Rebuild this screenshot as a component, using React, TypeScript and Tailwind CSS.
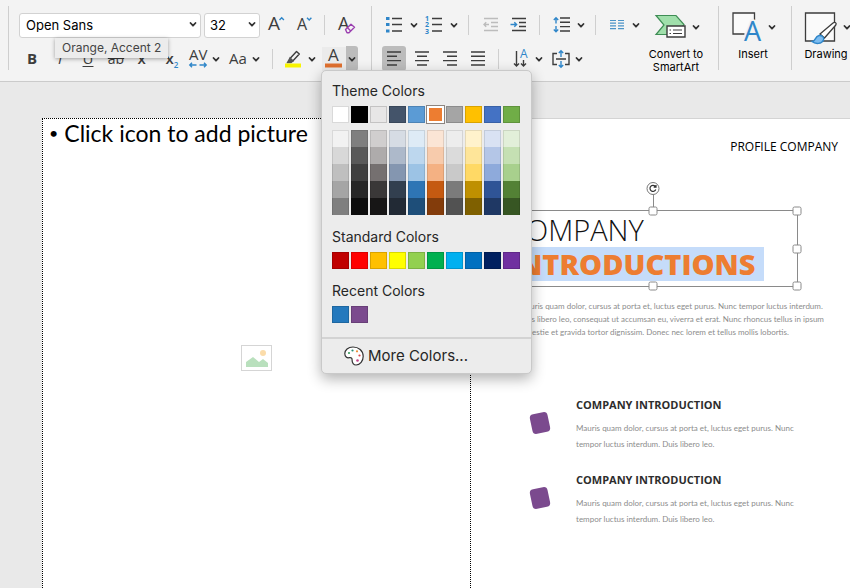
import type { ReactNode } from 'react';

const INK = '#3d3d3d';
const BLUE = '#2f86c9';

function Chevron() {
  return (
    <svg width="12" height="12" viewBox="0 0 12 12" fill="none" stroke="#333" strokeWidth="1.8" strokeLinecap="round" strokeLinejoin="round" aria-hidden="true">
      <path d="M3.5 5 6 7.7 8.5 5" />
    </svg>
  );
}

function More({ label, className = '' }: { label: string; className?: string }) {
  return (
    <button type="button" aria-label={label} className={`flex h-6 w-3 shrink-0 items-center justify-center ${className}`}>
      <Chevron />
    </button>
  );
}

function Tool({ label, className = 'w-6', children }: { label: string; className?: string; children: ReactNode }) {
  return (
    <button type="button" aria-label={label} className={`flex h-6 min-w-6 shrink-0 items-center justify-center text-[#3d3d3d] ${className}`}>
      {children}
    </button>
  );
}

function Divider({ className = '' }: { className?: string }) {
  return <span className={`h-5 w-px shrink-0 bg-[#cfcfcf] ${className}`} />;
}

function GroupDivider({ className = '' }: { className?: string }) {
  return <span className={`-mt-1.5 h-16 w-px shrink-0 bg-[#cecece] ${className}`} />;
}

function Svg({ w = 20, h = 20, children }: { w?: number; h?: number; children: ReactNode }) {
  return (
    <svg width={w} height={h} viewBox={`0 0 ${w} ${h}`} fill="none" stroke={INK} strokeWidth="1.4" className="shrink-0 overflow-visible font-['Open_Sans',sans-serif]" aria-hidden="true">
      {children}
    </svg>
  );
}

function Glyph({ x, y, size, fill = INK, weight = 400, children }: { x: number; y: number; size: number; fill?: string; weight?: number; children: string }) {
  return (
    <text x={x} y={y} fontSize={size} fill={fill} stroke="none" fontWeight={weight}>
      {children}
    </text>
  );
}

function FontGroup() {
  return (
    <div className="flex shrink-0 flex-col gap-[9px] pl-2.5 pr-3">
      <div className="flex h-[25px] items-center">
        <div className="relative h-[25px] w-[182px]">
          <select aria-label="Font" className="h-full w-full appearance-none rounded-[3px] border border-[#d2d2d2] bg-white pl-1.5 text-[13px] leading-none text-black">
            <option>Open Sans</option>
          </select>
          <span className="pointer-events-none absolute right-0.5 top-1.5"><Chevron /></span>
        </div>
        <div className="relative ml-[3px] h-[25px] w-14">
          <select aria-label="Font size" className="h-full w-full appearance-none rounded-[3px] border border-[#d2d2d2] bg-white pl-[5px] text-[13px] leading-none text-black">
            <option>32</option>
          </select>
          <span className="pointer-events-none absolute right-0.5 top-1.5"><Chevron /></span>
        </div>
        <Tool label="Increase font size" className="ml-1">
          <Svg>
            <Glyph x={2} y={15} size={19}>A</Glyph>
            <path d="m13.500 5 2.200-2.300 2.200 2.300" stroke={BLUE} />
          </Svg>
        </Tool>
        <Tool label="Decrease font size" className="ml-1">
          <Svg>
            <Glyph x={3} y={15} size={16}>A</Glyph>
            <path d="m13 2.700 2.200 2.300 2.200-2.300" stroke={BLUE} />
          </Svg>
        </Tool>
        <Divider className="ml-2" />
        <Tool label="Clear formatting" className="ml-2.5">
          <Svg>
            <Glyph x={1} y={15} size={18}>A</Glyph>
            <path d="m8.500 14.500 5.500-5.300 3.500 3-5.500 5.500h-2z" fill="#f3f3f3" stroke="#9b3fb0" strokeLinejoin="round" />
            <path d="m10.500 12.700 3.300 3.200" stroke="#9b3fb0" />
          </Svg>
        </Tool>
      </div>
      <div className="-ml-px flex h-[25px] items-center font-['Open_Sans',sans-serif] text-[15px]">
        <Tool label="Bold" className="w-7"><b>B</b></Tool>
        <Tool label="Italic" className="w-7"><i>I</i></Tool>
        <Tool label="Underline" className="w-7"><u className="underline-offset-2">U</u></Tool>
        <Tool label="Strikethrough" className="w-7 text-sm"><s>ab</s></Tool>
        <Tool label="Superscript" className="w-7 font-semibold">x<sup className="text-[8px] text-[#2f86c9]">2</sup></Tool>
        <Tool label="Subscript" className="w-7 font-semibold">x<sub className="mt-2 text-[8px] text-[#2f86c9]">2</sub></Tool>
        <Tool label="Character spacing">
          <Svg>
            <Glyph x={1} y={11} size={15}>AV</Glyph>
            <path d="M8.500 16H2m2-2.200L1.800 16 4 18.200M11.500 16H18m-2-2.200 2.200 2.200-2.200 2.200" stroke={BLUE} />
          </Svg>
        </Tool>
        <More label="Spacing options" />
        <Tool label="Change case" className="ml-1"><span>Aa</span></Tool>
        <More label="Case options" />
        <Divider className="ml-2.5" />
        <Tool label="Highlight" className="ml-2">
          <Svg>
            <path d="m7 9.500 6.500-7 2.800 2.600L9.800 12H7z" strokeLinejoin="round" />
            <path d="M7 9 4.500 13.500H8L10 12z" fill="#555" stroke="#555" />
            <path d="M2 16.500h16" stroke="#f8f400" strokeWidth="4" />
          </Svg>
        </Tool>
        <More label="Highlight options" className="ml-px" />
        <Tool label="Font color" className="ml-1 bg-[#ebebeb]">
          <Svg>
            <Glyph x={4} y={12} size={17}>A</Glyph>
            <path d="M1 16.500h17" stroke="#e0702f" strokeWidth="4" />
          </Svg>
        </Tool>
        <button type="button" aria-label="Font color options" aria-expanded="true" className="flex h-[25px] w-3 items-center justify-center rounded-r-[3px] bg-[#bcbcbc]">
          <Chevron />
        </button>
      </div>
    </div>
  );
}

function ParagraphGroup() {
  return (
    <div className="flex shrink-0 flex-col gap-[9px] pl-2.5">
      <div className="flex h-[25px] items-center">
        <Tool label="Bullets">
          <Svg>
            <path d="M8 3.500h10M8 9.500h10M8 16h10" />
            <path d="M2 3.500h3.500M2 9.500h3.500M2 16h3.500" stroke={BLUE} strokeWidth="3.200" />
          </Svg>
        </Tool>
        <More label="Bullet options" className="ml-0.5" />
        <Tool label="Numbering" className="ml-0.5">
          <Svg>
            <path d="M8 3.500h10M8 9.500h10M8 16h10" />
            <Glyph x={1} y={6} size={7} fill={BLUE} weight={700}>1</Glyph>
            <Glyph x={1} y={12} size={7} fill={BLUE} weight={700}>2</Glyph>
            <Glyph x={1} y={19} size={7} fill={BLUE} weight={700}>3</Glyph>
          </Svg>
        </Tool>
        <More label="Numbering options" className="ml-0.5" />
        <Divider className="ml-2" />
        <Tool label="Decrease indent" className="ml-2.5">
          <Svg>
            <path d="M3 3.500h14M10 7.500h7M10 11.500h7M3 15.500h14M8 9.500H3m2.200-2.300L3 9.500l2.200 2.300" stroke="#bcbcbc" />
          </Svg>
        </Tool>
        <Tool label="Increase indent" className="ml-1">
          <Svg>
            <path d="M3 3.500h14M10 7.500h7M10 11.500h7M3 15.500h14" />
            <path d="M1.500 9.500h6M5.300 7.200l2.300 2.300-2.300 2.300" stroke={BLUE} />
          </Svg>
        </Tool>
        <Divider className="ml-2" />
        <Tool label="Line spacing" className="ml-2.5">
          <Svg>
            <path d="M8 3h10M8 7.300h10M8 11.600h10M8 16h10" />
            <path d="M4 8.500V3M1.800 5 4 2.800 6.200 5M4 11v5.500M1.800 14.500 4 16.700l2.200-2.200" stroke={BLUE} />
          </Svg>
        </Tool>
        <More label="Line spacing options" className="ml-px" />
        <Divider className="ml-2" />
        <Tool label="Columns" className="ml-2.5">
          <Svg>
            <path d="M2 5.500h6M2 8.200h6M2 10.900h6M2 13.600h6M10 5.500h6M10 8.200h6M10 10.900h6M10 13.600h6" stroke="#4c94c8" strokeWidth="1.200" />
          </Svg>
        </Tool>
        <More label="Column options" />
      </div>
      <div className="flex h-[25px] items-center">
        <button type="button" aria-label="Align left" aria-pressed="true" className="mr-1 flex h-[25px] w-6 items-center justify-center rounded-[3px] bg-[#bcbcbc]">
          <Svg><path d="M3 3h14M3 7.300h10M3 11.600h14M3 16h10" /></Svg>
        </button>
        <Tool label="Align center" className="mr-1">
          <Svg><path d="M3 3h14M5 7.300h10M3 11.600h14M5 16h10" /></Svg>
        </Tool>
        <Tool label="Align right" className="mr-1">
          <Svg><path d="M3 3h14M7 7.300h10M3 11.600h14M7 16h10" /></Svg>
        </Tool>
        <Tool label="Justify">
          <Svg><path d="M3 3h14M3 7.300h14M3 11.600h14M3 16h14" /></Svg>
        </Tool>
        <Divider className="ml-2" />
        <Tool label="Text direction" className="ml-2.5">
          <Svg>
            <path d="M5.500 2V17M3 14.500 5.500 17 8 14.500M12.500 11V17M10 14.500l2.500 2.500 2.500-2.500" />
            <Glyph x={9} y={9} size={12} fill={BLUE}>A</Glyph>
          </Svg>
        </Tool>
        <More label="Direction options" />
        <Tool label="Align text" className="ml-1">
          <Svg>
            <path d="M6 4.500H2v11h4M14 4.500h4v11h-4M5 10h10" />
            <path d="M10 8V2M7.800 4 10 1.800 12.200 4M10 12v6M7.800 16l2.200 2.200 2.200-2.200" stroke={BLUE} />
          </Svg>
        </Tool>
        <More label="Align text options" />
      </div>
    </div>
  );
}

function BigTool({ icon, children, className = '' }: { icon: ReactNode; children: ReactNode; className?: string }) {
  return (
    <button type="button" className={`flex w-16 shrink-0 flex-col items-center ${className}`}>
      <span className="ml-1 flex h-[30px] items-center gap-1">
        {icon}
        <Chevron />
      </span>
      <span className="mt-1.5 whitespace-nowrap text-[11px] leading-[13px] text-black">{children}</span>
    </button>
  );
}

function Toolbar() {
  return (
    <header className="flex h-[82px] shrink-0 items-start overflow-hidden border-b border-[#cbcbcb] bg-[#f3f3f3] pl-2 pt-3">
      <GroupDivider />
      <FontGroup />
      <GroupDivider />
      <ParagraphGroup />
      <BigTool
        className="ml-0.5"
        icon={
          <Svg w={31} h={30}>
            <path d="M1 3.500h20l8 9-8 10H1l8-9.500z" fill="#a0dfab" stroke="#3f8d55" strokeWidth="1.200" />
            <path d="M12 14h18v11H12z" fill="#fff" />
            <path d="M14.500 18h1.500M18 18h9M14.500 21.500h1.500M18 21.500h9" strokeWidth="1.200" />
          </Svg>
        }
      >
        Convert to<br />SmartArt
      </BigTool>
      <GroupDivider className="ml-2.5" />
      <BigTool
        className="ml-0.5"
        icon={
          <Svg w={30} h={30}>
            <path d="M12.500 22H1V1h21.500v7" fill="#fafafa" stroke={INK} strokeWidth="1.300" />
            <text x="12" y="29" fontSize="27" fill="#d9ecfa" stroke="#f3f3f3" strokeWidth="3" paintOrder="stroke">A</text>
            <text x="12" y="29" fontSize="27" fill="#2f86c9" stroke="none">A</text>
          </Svg>
        }
      >
        Insert
      </BigTool>
      <GroupDivider className="ml-1.5" />
      <BigTool
        className="ml-0.5"
        icon={
          <Svg w={33} h={32}>
            <path d="M1.500 2h29v28h-29z" fill="#fafafa" strokeWidth="1.300" />
            <path d="m16 23 13-11c2-1.500 4 .2 2.800 2L20.500 27z" fill="#fff" strokeWidth="1.300" />
            <path d="M8 30.500c4 0 2.500-5 7-6 3-.5 5.500 2 4.500 4.500-1.500 4-8 4.500-11.500 1.500z" fill="#7cbcf0" stroke={BLUE} />
          </Svg>
        }
      >
        Drawing
      </BigTool>
    </header>
  );
}

const THEME = [
  { name: 'White', base: 'bg-white', tints: ['bg-[#f2f2f2]', 'bg-[#d8d8d8]', 'bg-[#bfbfbf]', 'bg-[#a5a5a5]', 'bg-[#7f7f7f]'] },
  { name: 'Black', base: 'bg-black', tints: ['bg-[#7f7f7f]', 'bg-[#595959]', 'bg-[#3f3f3f]', 'bg-[#262626]', 'bg-[#0c0c0c]'] },
  { name: 'Light Gray', base: 'bg-[#e7e6e6]', tints: ['bg-[#d0cece]', 'bg-[#aeabab]', 'bg-[#757070]', 'bg-[#3a3838]', 'bg-[#171616]'] },
  { name: 'Blue-Gray', base: 'bg-[#44546a]', tints: ['bg-[#d6dce4]', 'bg-[#adb9ca]', 'bg-[#8496b0]', 'bg-[#323f4f]', 'bg-[#222a35]'] },
  { name: 'Blue', base: 'bg-[#5b9bd5]', tints: ['bg-[#deebf6]', 'bg-[#bdd7ee]', 'bg-[#9cc3e5]', 'bg-[#2e75b5]', 'bg-[#1e4e79]'] },
  { name: 'Orange', base: 'bg-[#ed7d31]', tints: ['bg-[#fbe5d5]', 'bg-[#f7cbac]', 'bg-[#f4b183]', 'bg-[#c55a11]', 'bg-[#833c0b]'] },
  { name: 'Gray', base: 'bg-[#a5a5a5]', tints: ['bg-[#ededed]', 'bg-[#dbdbdb]', 'bg-[#c9c9c9]', 'bg-[#7b7b7b]', 'bg-[#525252]'] },
  { name: 'Gold', base: 'bg-[#ffc000]', tints: ['bg-[#fff2cc]', 'bg-[#fee599]', 'bg-[#ffd965]', 'bg-[#bf9000]', 'bg-[#7f6000]'] },
  { name: 'Indigo', base: 'bg-[#4472c4]', tints: ['bg-[#d9e2f3]', 'bg-[#b4c6e7]', 'bg-[#8eaadb]', 'bg-[#2f5496]', 'bg-[#1f3864]'] },
  { name: 'Green', base: 'bg-[#70ad47]', tints: ['bg-[#e2efd9]', 'bg-[#c5e0b3]', 'bg-[#a8d08d]', 'bg-[#538135]', 'bg-[#375623]'] },
];

const STANDARD = [
  ['Dark Red', 'bg-[#c00000]'], ['Red', 'bg-[#ff0000]'], ['Orange', 'bg-[#ffc000]'], ['Yellow', 'bg-[#ffff00]'], ['Light Green', 'bg-[#92d050]'],
  ['Green', 'bg-[#00b050]'], ['Light Blue', 'bg-[#00b0f0]'], ['Blue', 'bg-[#0070c0]'], ['Dark Blue', 'bg-[#002060]'], ['Purple', 'bg-[#7030a0]'],
];

const RECENT = [['Blue', 'bg-[#2479bd]'], ['Purple', 'bg-[#7b4a8e]']];

function Swatch({ label, color, selected = false }: { label: string; color: string; selected?: boolean }) {
  const edge = selected ? 'border-2 border-white outline outline-[#8d8580]' : 'border border-black/15';
  return <button type="button" aria-label={label} className={`block h-[17px] w-[17px] shrink-0 ${color} ${edge}`} />;
}

function ColorMenu() {
  return (
    <div role="dialog" aria-label="Font color" className="absolute left-[321px] top-[70px] z-20 w-[211px] rounded-[5px] border border-[#c9c9c9] bg-[#ececec] text-[#262626] shadow-[0_5px_14px_rgba(0,0,0,0.3)]">
      <div className="px-2.5 pb-3.5 pt-2.5 text-[14px] leading-5">
        <h2>Theme Colors</h2>
        <div className="mt-[5px] flex gap-0.5">
          {THEME.map((c) => <Swatch key={c.name} label={c.name} color={c.base} selected={c.name === 'Orange'} />)}
        </div>
        <div className="mt-[7px] flex gap-0.5">
          {THEME.map((c) => (
            <div key={c.name}>
              {c.tints.map((t, i) => (
                <button key={t} type="button" aria-label={`${c.name} shade ${i + 1}`} className={`block h-[17px] w-[17px] border-x border-black/10 first:border-t ${t}`} />
              ))}
            </div>
          ))}
        </div>
        <h2 className="mt-3">Standard Colors</h2>
        <div className="mt-[5px] flex gap-0.5">
          {STANDARD.map(([n, c]) => <Swatch key={n} label={n} color={c} />)}
        </div>
        <h2 className="mt-3">Recent Colors</h2>
        <div className="mt-[5px] flex gap-0.5">
          {RECENT.map(([n, c]) => <Swatch key={n} label={n} color={c} />)}
        </div>
      </div>
      <button type="button" className="flex h-9 w-full items-center gap-1 border-t-2 border-[#d3d3d3] pl-[22px] text-[15px]">
        <svg width="20" height="20" viewBox="0 0 20 20" aria-hidden="true">
          <path d="M9 1C4 1 .8 4 .8 7.600c0 3 2.200 4.700 4.400 4.100 2-.5 3 .5 2.900 2.200-.1 3 1.500 5.100 4 5.100 4 0 7.100-4 7.100-8.700C19.200 4.500 14.500 1 9 1z" fill="#fff" stroke="#333" strokeWidth="1.200" />
          <circle cx="5" cy="7" r="1.100" fill="#3a9d5c" />
          <circle cx="8.500" cy="4.500" r="1.100" fill="#278f75" />
          <circle cx="13" cy="5.300" r="1.100" fill="#ed8b36" />
          <circle cx="15.500" cy="9.500" r="1.100" fill="#e0454c" />
          <circle cx="13.500" cy="14.500" r="1.300" fill="#c04488" />
        </svg>
        <span>More Colors...</span>
      </button>
    </div>
  );
}

const HANDLES = [
  'left-0 top-0', 'left-1/2 top-0', 'left-full top-0', 'left-0 top-1/2',
  'left-full top-1/2', 'left-0 top-full', 'left-1/2 top-full', 'left-full top-full',
];

function TitleBox() {
  return (
    <div className="relative ml-9 mt-[54px] h-[77px] w-[291px] border border-[#8a8a8a] pt-0.5">
      <h1 className="text-[29px] leading-[34px]">
        <span className="block font-light text-[#111]">COMPANY</span>
        <span className="inline-block bg-[#c5dcfa] pr-2 font-extrabold text-[#ed7d31]">INTRODUCTIONS</span>
      </h1>
      <span className="absolute -top-4 left-1/2 h-4 w-px bg-[#8a8a8a]" />
      <button type="button" aria-label="Rotate" className="absolute -top-[29px] left-1/2 flex h-[13px] w-[13px] -translate-x-1/2 items-center justify-center rounded-full border border-[#777] bg-white">
        <svg width="9" height="9" viewBox="0 0 9 9" fill="none" stroke="#333" strokeWidth="1.200" aria-hidden="true">
          <path d="M7.300 5.500A3 3 0 1 1 6.800 2.500M7.500 1v2.200H5.200" />
        </svg>
      </button>
      {HANDLES.map((p) => (
        <span key={p} className={`absolute h-[9px] w-[9px] -translate-x-1/2 -translate-y-1/2 rounded-[2px] border border-[#8a8a8a] bg-white ${p}`} />
      ))}
    </div>
  );
}

function Feature() {
  return (
    <article className="flex h-[75px] items-start">
      <span className="mt-4 h-[20px] w-[18px] shrink-0 -rotate-12 rounded-[4px] bg-[#7b4a8e]" />
      <div className="ml-[27px]">
        <h3 className="text-[11px] font-bold leading-4 text-[#2d2d2d]">COMPANY INTRODUCTION</h3>
        <p className="mt-[7px] font-['Lato',sans-serif] text-[8px] leading-4 text-[#8c8c8c]">
          Mauris quam dolor, cursus at porta et, luctus eget purus. Nunc<br />tempor luctus interdum. Duis libero leo.
        </p>
      </div>
    </article>
  );
}

function Slide() {
  return (
    <main className="ml-[42px] mt-9 flex min-h-0 flex-1 bg-white">
      <section className="flex w-[53.1%] shrink-0 flex-col border-x border-t border-dotted border-black font-['Lato',sans-serif]">
        <p className="flex items-center gap-1.5 pl-1.5 text-[23px] leading-7 text-black">
          <span className="text-base leading-7">•</span>
          <span>Click icon to add picture</span>
        </p>
        <button type="button" aria-label="Add picture" className="mx-auto mt-[198px] flex h-[26px] w-[31px] items-center justify-center border border-[#d5d5d5] bg-white">
          <svg width="27" height="22" viewBox="0 0 27 22" aria-hidden="true">
            <circle cx="20" cy="6" r="3" fill="#fbdcaa" />
            <path d="M3 20v-5l7-5 6 5 4-3 5 4v4z" fill="#b9e0bd" />
          </svg>
        </button>
      </section>
      <section className="min-w-0 flex-1 border-t border-[#d4d4d4] font-['Open_Sans',sans-serif]">
        <p className="pr-3 pt-[19px] text-right text-[12px] leading-[18px] text-black">PROFILE COMPANY</p>
        <TitleBox />
        <p className="ml-12 mt-[13px] whitespace-nowrap font-['Lato',sans-serif] text-[8px] leading-[13px] text-[#8c8c8c]">
          Mauris quam dolor, cursus at porta et, luctus eget purus. Nunc tempor luctus interdum.<br />
          Duis libero leo, consequat ut accumsan eu, viverra et erat. Nunc rhoncus tellus in ipsum<br />
          molestie et gravida tortor dignissim. Donec nec lorem et tellus mollis lobortis.
        </p>
        <div className="ml-[60px] mt-[58px]">
          <Feature />
          <Feature />
        </div>
      </section>
    </main>
  );
}

export default function App() {
  return (
    <div className="relative flex h-screen flex-col overflow-hidden bg-[#e9e9e9] font-['Inter',sans-serif]">
      <Toolbar />
      <div role="tooltip" className="absolute left-[55px] top-[38px] z-10 bg-[#ececec] px-[7px] py-0.5 text-[12px] leading-4 text-[#444] shadow-[0_1px_4px_rgba(0,0,0,0.35)]">
        Orange, Accent 2
      </div>
      <ColorMenu />
      <Slide />
    </div>
  );
}
